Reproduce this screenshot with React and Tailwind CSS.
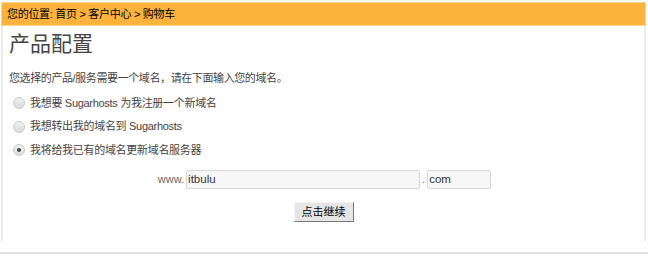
export default function App() {
  const options = [
    { label: "我想要 Sugarhosts 为我注册一个新域名", checked: false },
    { label: "我想转出我的域名到 Sugarhosts", checked: false },
    { label: "我将给我已有的域名更新域名服务器", checked: true },
  ];

  return (
    <div
      className="w-[648px] h-[256px] bg-white overflow-hidden text-[#444]"
      style={{ fontFamily: '"Liberation Sans", "Noto Sans CJK SC", sans-serif' }}
    >
      <div className="ml-[1px] mt-[2px] w-[645px] h-[239px] border-x-2 border-[#ececec] border-t-0">
        {/* breadcrumb */}
        <div className="-mx-[2px] h-[24px] bg-[#fcb33d] border border-[#fdd48a] pl-[5px] text-[11px] leading-[22px] text-black tracking-[-0.3px]">
          您的位置: 首页 &gt; 客户中心 &gt; 购物车
        </div>

        <div className="pl-[6px]">
          <h1 className="mt-[5px] text-[21px] leading-[26px] text-[#444] font-normal">产品配置</h1>

          <p className="mt-[13px] text-[11px] leading-[16px] text-[#444] tracking-[-0.4px]">
            您选择的产品/服务需要一个域名，请在下面输入您的域名。
          </p>

          <div className="mt-[9px] flex flex-col gap-[7.5px] pl-[4px]">
            {options.map((o) => (
              <label key={o.label} className="flex items-center gap-[5px] h-[16px] text-[11px] text-[#444] tracking-[-0.3px]">
                <span className="w-[12px] h-[12px] rounded-full border border-[#c8c8c8] bg-gradient-to-b from-[#f0f0f0] to-[#dcdcdc] flex items-center justify-center">
                  {o.checked && <span className="w-[4px] h-[4px] rounded-full bg-[#444]"></span>}
                </span>
                {o.label}
              </label>
            ))}
          </div>

          {/* domain inputs */}
          <div className="mt-[12px] flex items-center justify-center pr-[4px] text-[11px] text-[#666]">
            <span className="mr-[2px]">www.</span>
            <div className="w-[234px] h-[19px] border border-[#d8d8d8] rounded-[2px] bg-[#f7f7f7] pl-[1px] text-[11.5px] leading-[17px] text-[#333]">
              itbulu
            </div>
            <span className="mx-[2px]">.</span>
            <div className="w-[64px] h-[19px] border border-[#d8d8d8] rounded-[2px] bg-[#f7f7f7] pl-[1px] text-[11.5px] leading-[17px] text-[#333]">
              com
            </div>
          </div>

          <div className="mt-[13px] flex justify-center">
            <button className="mr-[6px] h-[20px] px-[7px] border border-[#777] border-t-[#f2f2f2] border-l-[#f2f2f2] bg-[#e6e6e6] text-[11px] leading-[16px] text-black">
              点击继续
            </button>
          </div>
        </div>
      </div>

      <div className="mt-[11px] h-[2px] bg-[#e0e0e0]"></div>
    </div>
  );
}
